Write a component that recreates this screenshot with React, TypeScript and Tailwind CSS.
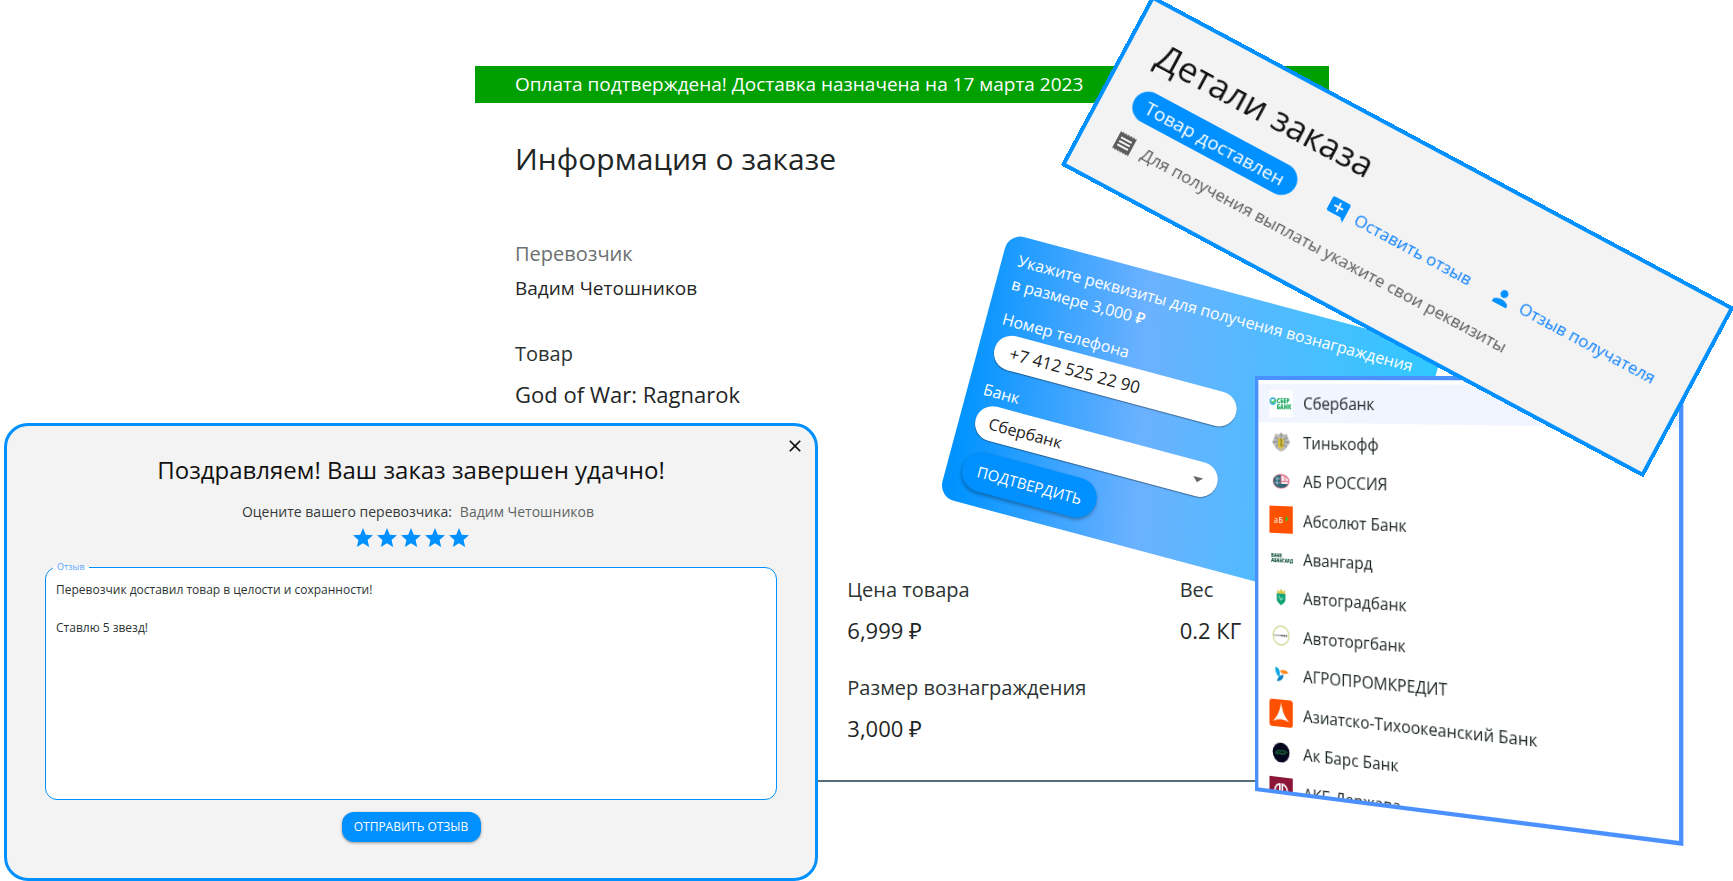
import type { ReactNode } from "react";
import { MdAddComment, MdArrowDropDown, MdClose, MdPerson, MdReceipt, MdStar } from "react-icons/md";

function Field({ label, value, muted, small }: { label: string; value: string; muted?: boolean; small?: boolean }) {
  return (
    <div className={small ? "flex flex-col gap-2" : "flex flex-col gap-3.5"}>
      <dt className={muted ? "text-xl leading-6 text-[#6b7070]" : "text-xl leading-6 text-[#2c3333]"}>{label}</dt>
      <dd className={small ? "text-[19px] leading-7" : "text-[22px] leading-7"}>{value}</dd>
    </div>
  );
}

function OrderInfo() {
  return (
    <main className="ml-[475px] pt-[66px]">
      <p role="status" className="flex h-[37px] w-[854px] items-center bg-[#00a000] px-10 text-[19px] text-white">
        Оплата подтверждена! Доставка назначена на 17 марта 2023
      </p>
      <section className="w-[1037px] pl-10">
        <h1 className="mt-9 text-[30px] leading-10">Информация о заказе</h1>
        <dl className="mt-[63px] flex flex-col gap-10">
          <Field label="Перевозчик" value="Вадим Четошников" muted small />
          <Field label="Товар" value="God of War: Ragnarok" />
        </dl>
        <dl className="mt-[170px] grid grid-cols-3 gap-y-8">
          <div className="col-start-2">
            <Field label="Цена товара" value="6,999 ₽" />
          </div>
          <Field label="Вес" value="0.2 КГ" />
          <div className="col-start-2">
            <Field label="Размер вознаграждения" value="3,000 ₽" />
          </div>
        </dl>
      </section>
      <hr className="mt-[38px] w-[854px] border-t-2 border-[#5b6c79]" />
    </main>
  );
}

function PayoutCard() {
  return (
    <form
      onSubmit={(e) => e.preventDefault()}
      className="absolute top-[233px] left-[1009px] flex h-[273px] w-[449px] origin-top-left rotate-[15deg] flex-col items-start rounded-2xl bg-[linear-gradient(78deg,#0093ff_3%,#6bb1ff_40%,#2ec8ff_100%)] px-4 pt-3 text-white"
    >
      <p className="text-base leading-6 font-medium whitespace-nowrap">
        Укажите реквизиты для получения вознаграждения
        <br />в размере 3,000 ₽
      </p>
      <label htmlFor="phone" className="mt-3 text-base leading-6 font-medium">
        Номер телефона
      </label>
      <input
        id="phone"
        type="tel"
        defaultValue="+7 412 525 22 90"
        className="mt-0.5 h-[35px] w-[250px] rounded-full bg-white px-4 text-[17px] text-[#222] shadow-[0_1px_1px_#0006]"
      />
      <label htmlFor="bank" className="mt-3 text-base leading-6 font-medium">
        Банк
      </label>
      <div className="relative mt-0.5">
        <select
          id="bank"
          defaultValue="sber"
          className="block h-[35px] w-[250px] appearance-none rounded-full bg-white px-3.5 text-base text-[#222] shadow-[0_1px_1px_#0006]"
        >
          <option value="sber">Сбербанк</option>
          <option value="tinkoff">Тинькофф</option>
        </select>
        <MdArrowDropDown className="pointer-events-none absolute top-1.5 right-2 size-6 text-[#666]" />
      </div>
      <button className="mt-3 h-10 w-[138px] shrink-0 rounded-[20px] bg-[#0090ff] text-[15px] shadow-[0_2px_4px_#0005]">
        ПОДТВЕРДИТЬ
      </button>
    </form>
  );
}

const banks: { name: string; logo: ReactNode }[] = [
  {
    name: "Сбербанк",
    logo: (
      <>
        <rect width="27" height="27" fill="#fff" />
        <circle cx="4" cy="11" r="3" fill="none" stroke="#21a6d8" strokeWidth="1.4" />
        <path d="M2 11l2 1.500 3.500-3" fill="none" stroke="#3cc13b" strokeWidth="1.400" />
        <text x="8.500" y="13" fontSize="6" fontWeight="800" fill="#12a65a">СБЕР</text>
        <text x="8.500" y="19" fontSize="6" fontWeight="800" fill="#12a65a">БАНК</text>
      </>
    ),
  },
  {
    name: "Тинькофф",
    logo: (
      <>
        <path d="M13.500 4l3 2 4-.5 1 4 2.500 4-3 4-3 3.500-4.500 2-4.500-2-3-3.500-3-4 2.500-4 1-4 4 .5z" fill="#b9bab7" />
        <path d="M6 9l5 2M4 14l6-1M7 19l4-4M21 9l-5 2M23 14l-6-1M20 19l-4-4M13.500 5v4" stroke="#7f817d" />
        <path d="M10 10h6.500v8l-3 3-3.500-3z" fill="#d5c13a" />
        <path d="M12 11h2l-1 6h3" fill="none" stroke="#746b25" />
      </>
    ),
  },
  {
    name: "АБ РОССИЯ",
    logo: (
      <>
        <ellipse cx="13.500" cy="13.500" rx="9" ry="6.500" fill="#f9e9ec" stroke="#e8748a" strokeWidth="1.500" />
        <path d="M13.500 7C7 7 4.500 10 4.500 13.500S8 20 13.500 20c4 0 7-2 8-4h-8z" fill="#326776" />
        <path d="M13.500 13.500h9M13.500 7v8M18 8v5" stroke="#e27b8e" strokeWidth="1.200" />
        <path d="M7 11h5M9 9v8M6 15h6" stroke="#b7d3d8" strokeWidth=".8" />
      </>
    ),
  },
  {
    name: "Абсолют Банк",
    logo: (
      <>
        <rect width="27" height="27" fill="#ff5000" />
        <text x="5" y="17" fontSize="9" fontWeight="600" fill="#ffe3d5">аБ</text>
        <path d="M20 10c-2 2-2 4-.5 5 2-1 2.500-3 .5-5z" fill="#20d12a" />
      </>
    ),
  },
  {
    name: "Авангард",
    logo: (
      <>
        <text x="2" y="12" fontSize="4.500" fontWeight="800" fill="#14543c">БАНК</text>
        <text x="2" y="17" fontSize="4.500" fontWeight="800" fill="#14543c">АВАНГАРД</text>
      </>
    ),
  },
  {
    name: "Автоградбанк",
    logo: (
      <>
        <path d="M9 6l2 2 2.500-3L16 8l2-2v4H9z" fill="#d8c84e" />
        <path d="M8.500 10h10v6c0 2-3 4-5 5.500-2-1.500-5-3.500-5-5.500z" fill="#12a277" />
        <path d="M11 12l2 4 3-2" fill="none" stroke="#8fe0bf" strokeWidth="1.200" />
      </>
    ),
  },
  {
    name: "Автоторгбанк",
    logo: (
      <>
        <circle cx="13.500" cy="13.500" r="9.300" fill="#fff" stroke="#c9d98d" strokeWidth="1.300" />
        <path d="M5.500 13.500h7" stroke="#999" strokeWidth="1.700" strokeDasharray="1.5 .4" />
        <path d="M13 13.500h8" stroke="#444" strokeWidth="1.700" strokeDasharray="1.5 .4" />
      </>
    ),
  },
  {
    name: "АГРОПРОМКРЕДИТ",
    logo: (
      <>
        <path d="M7 6c4 0 6 4 4.500 10C8.500 14 6 10 7 6z" fill="#12a8e0" />
        <path d="M12 10c3-2 7-2 10 1-3 2-7 2-10-1z" fill="#ff8a1e" />
        <path d="M9 20c0-3 3-6 7-7 1 3-2 7-7 7z" fill="#0a7fc2" />
      </>
    ),
  },
  {
    name: "Азиатско-Тихоокеанский Банк",
    logo: (
      <>
        <rect width="27" height="27" rx="3" fill="#ff5000" />
        <path d="M13.500 3c1.500 8 4 14 9.500 19-6-3.500-13-3.500-19 0C9.500 17 12 11 13.500 3z" fill="#fff" />
      </>
    ),
  },
  {
    name: "Ак Барс Банк",
    logo: (
      <>
        <circle cx="13.500" cy="13.500" r="9.800" fill="#06061f" />
        <path d="M7 15c1-3 4-4 6-3 3-1 6 0 8 1M8 15l4-1 2 1 5-1" fill="none" stroke="#156b38" strokeWidth="1.300" />
      </>
    ),
  },
  {
    name: "АКБ Держава",
    logo: (
      <>
        <rect width="27" height="27" fill="#8c1637" />
        <path d="M6 17c0-7 3-10 6-10v10M21 17c0-7-3-10-6-10v10M9 17v-4M18 17v-4" fill="none" stroke="#fff" strokeWidth="2" />
      </>
    ),
  },
];

function BankList() {
  return (
    <div className="absolute top-[376px] left-[1255px] perspective-[2020px] perspective-origin-top-left">
      <div className="h-[415px] w-[446px] origin-top-left rotate-y-[-32deg] overflow-hidden border-4 border-[#4a90ff] bg-white pt-1">
        <ul className="flex h-[423px] flex-col text-[17px] text-[#1c2424]">
          {banks.map(({ name, logo }, i) => (
            <li key={name} className="flex flex-1">
              <button
                type="button"
                className={
                  i === 0
                    ? "flex w-full items-center gap-3 bg-[#f0f5ff] pl-[13px] leading-6"
                    : "flex w-full items-center gap-3 pl-[13px] leading-6"
                }
              >
                <svg viewBox="0 0 27 27" className="size-[27px]" aria-hidden="true">
                  {logo}
                </svg>
                {name}
              </button>
            </li>
          ))}
        </ul>
      </div>
    </div>
  );
}

function OrderDetails() {
  return (
    <section className="absolute top-[-5px] left-[1152px] flex h-[193px] w-[661px] origin-top-left rotate-[28.2deg] flex-col border-4 border-[#0090ff] bg-[#f3f3f3] px-[30px] pt-5 whitespace-nowrap">
      <h2 className="text-[35px] leading-[48px] text-[#111]">Детали заказа</h2>
      <div className="mt-[13px] flex items-center text-[#0f82ff]">
        <span className="flex h-8 w-[183px] items-center justify-center rounded-full bg-[#0090ff] text-[19px] font-medium text-white">
          Товар доставлен
        </span>
        <a href="#review" className="ml-9 flex items-center gap-2 text-[17px]">
          <MdAddComment className="size-6 text-[#0090ff]" />
          Оставить отзыв
        </a>
        <a href="#recipient" className="ml-6 flex items-center gap-2 text-[17px]">
          <MdPerson className="size-6 text-[#0090ff]" />
          Отзыв получателя
        </a>
      </div>
      <p className="mt-[15px] flex items-center gap-2 text-[17px] leading-6 text-[#5c5c5c]">
        <MdReceipt className="size-6" />
        Для получения выплаты укажите свои реквизиты
      </p>
    </section>
  );
}

function ReviewDialog() {
  return (
    <section
      role="dialog"
      aria-labelledby="review-title"
      className="absolute top-[423px] left-1 flex h-[458px] w-[814px] flex-col items-center rounded-3xl border-[3px] border-[#0090ff] bg-[#f3f3f3] px-[38px]"
    >
      <button type="button" aria-label="Закрыть" className="absolute top-2.5 right-2.5 text-[#111]">
        <MdClose className="size-5" />
      </button>
      <h2 id="review-title" className="mt-7 text-2xl leading-8 text-[#111]">
        Поздравляем! Ваш заказ завершен удачно!
      </h2>
      <p className="mt-4 flex gap-2 pl-3.5 text-sm leading-5 text-[#333a3a]">
        Оцените вашего перевозчика: <span className="text-[#5f6464]">Вадим Четошников</span>
      </p>
      <div className="mt-1 flex" role="img" aria-label="5 из 5">
        {[1, 2, 3, 4, 5].map((n) => (
          <MdStar key={n} className="size-6 text-[#0090ff]" />
        ))}
      </div>
      <div className="relative mt-[17px] w-full">
        <label htmlFor="review" className="absolute -top-1.5 left-2 bg-[linear-gradient(#f3f3f3_50%,#fff_50%)] px-1 text-[9px] leading-3 text-[#5aa5ff]">
          Отзыв
        </label>
        <textarea
          id="review"
          defaultValue={"Перевозчик доставил товар в целости и сохранности!\n\nСтавлю 5 звезд!"}
          className="block h-[233px] w-full resize-none rounded-xl border border-[#0090ff] bg-white px-2.5 pt-3 text-xs leading-[19px] text-[#2c3333]"
        />
      </div>
      <button type="button" className="mt-3 h-[30px] w-[139px] rounded-xl bg-[#0090ff] text-xs text-white shadow-[0_1px_3px_#0006]">
        ОТПРАВИТЬ ОТЗЫВ
      </button>
    </section>
  );
}

export default function App() {
  return (
    <div className="relative min-h-screen overflow-hidden bg-white font-['Open_Sans','Noto_Sans',sans-serif] text-[#1f2626]">
      <OrderInfo />
      <PayoutCard />
      <BankList />
      <OrderDetails />
      <ReviewDialog />
    </div>
  );
}
